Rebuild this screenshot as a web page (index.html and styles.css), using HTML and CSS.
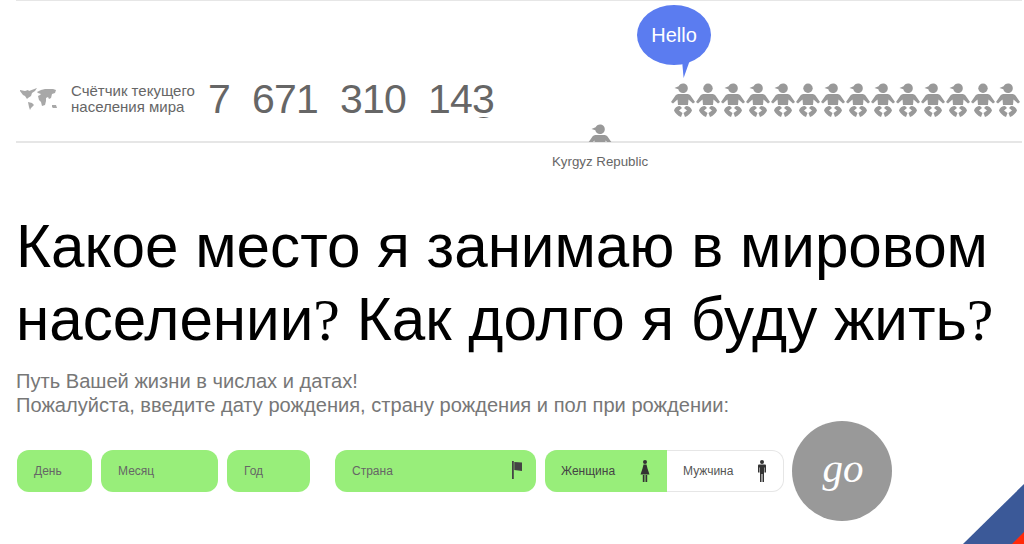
FILE: index.html
```html
<!DOCTYPE html>
<html lang="ru">

<head>
  <meta charset="UTF-8">
  <title>Счётчик населения мира</title>
  <link rel="stylesheet" href="styles.css">
</head>

<body>
  <svg class="sprites" width="0" height="0">
    <symbol id="baby-body" viewBox="0 0 24 34">
      <path d="M8 11h8c1.500 0 2.500 0.500 3.500 1.500l4.500 6.500-2 1.500-4.500-4-0.500 5.500h-10l-0.500-5.500-4.500 4-2-1.500 4.500-6.500c1-1 2-1.500 3.500-1.500z" />
      <path d="M9 23c-3 0-5.500 2-6 4.500 1 2.500 4 5.500 7 6.500l1.500-4-3.500-2.500 3-2.500z" />
      <path d="M15 23c3 0 5.500 2 6 4.500-1 2.500-4 5.500-7 6.500l-1.500-4 3.500-2.500-3-2.500z" />
    </symbol>
    <symbol id="baby" viewBox="0 0 24 34">
      <use href="#baby-body" width="24" height="34" />
      <path d="M12 0.500c2.700 0 4.800 2 4.800 4.700s-2.100 4.800-4.800 4.800c-2.400 0-4.300-1.600-4.700-3.800l-3.800-1.200 4.100-1.700c0.700-1.700 2.400-2.800 4.400-2.800z" />
    </symbol>
    <symbol id="baby-round" viewBox="0 0 24 34">
      <use href="#baby-body" width="24" height="34" />
      <circle cx="12" cy="5.200" r="4.700" />
    </symbol>
  </svg>

  <div class="page">
    <header class="ticker">
      <svg class="world-icon" viewBox="0 0 38 22">
        <path d="M0 2l5 1 3-1 1 1 8-3-2 3-3 2-1 3-3 2-1 1-2-3-2-1-3-4z" />
        <path d="M8 14l4 1 2 2-3 3-1 2-1-3z" />
        <path d="M17 4l4-2 4-1 8 0 3 1-1 3-3 1-1 4-2 1-1-2-2 1 0 3-1 4-3 1-1-4-2-2-1-4 2-1 1-1-3-1z" />
        <path d="M32 17l4 0 1 3-4 0-1-1z" />
      </svg>
      <p class="ticker-label">Счётчик текущего<br>населения мира</p>
      <div class="counter">
        <span class="group">7</span>
        <span class="group">671</span>
        <span class="group">310</span>
        <span class="group">14<span class="roll"><span class="roll-strip">3<br>2</span></span></span>
      </div>
      <div class="babies">
        <svg class="baby"><use href="#baby" /></svg>
        <svg class="baby"><use href="#baby-round" /></svg>
        <svg class="baby"><use href="#baby" /></svg>
        <svg class="baby"><use href="#baby" /></svg>
        <svg class="baby"><use href="#baby" /></svg>
        <svg class="baby"><use href="#baby-round" /></svg>
        <svg class="baby"><use href="#baby" /></svg>
        <svg class="baby"><use href="#baby" /></svg>
        <svg class="baby"><use href="#baby" /></svg>
        <svg class="baby"><use href="#baby" /></svg>
        <svg class="baby"><use href="#baby" /></svg>
        <svg class="baby"><use href="#baby" /></svg>
        <svg class="baby"><use href="#baby-round" /></svg>
        <svg class="baby"><use href="#baby" /></svg>
      </div>
      <div class="bubble">Hello</div>
      <div class="new-baby">
        <svg class="baby"><use href="#baby" /></svg>
      </div>
      <span class="country-tag">Kyrgyz Republic</span>
    </header>

    <h1 class="title">Какое место я занимаю в мировом населении<span class="question">?</span> Как долго я буду жить<span class="question">?</span></h1>

    <p class="intro">Путь Вашей жизни в числах и датах!<br>Пожалуйста, введите дату рождения, страну рождения и пол при рождении:</p>

    <form class="birth-form">
      <div class="field field-day">День</div>
      <div class="field field-month">Месяц</div>
      <div class="field field-year">Год</div>
      <div class="field field-country">
        Страна
        <svg class="flag-icon" viewBox="0 0 10 18">
          <path d="M0 0h1.800v18h-1.800z" />
          <path d="M2.300 1l7.700 0.500v8.500l-7.700 -1z" />
        </svg>
      </div>
      <div class="gender">
        <div class="gender-option active">
          Женщина
          <svg class="person-icon" viewBox="0 0 10 22">
            <circle cx="5" cy="2" r="2" />
            <path d="M3.500 4.500h3l1 4 2 6h-9l2-6z" />
            <path d="M2.800 15h1.700v7h-1.700zM5.500 15h1.700v7h-1.700z" />
          </svg>
        </div>
        <div class="gender-option">
          Мужчина
          <svg class="person-icon" viewBox="0 0 10 22">
            <circle cx="5" cy="2" r="2" />
            <path d="M1.500 4.500h7l0.500 1v7h-1.500v-5h-0.500v14.500h-1.500v-8h-1v8h-1.500v-14.500h-0.500v5h-1.500v-7z" />
          </svg>
        </div>
      </div>
      <div class="go-button">go</div>
    </form>
  </div>

  <svg class="corner" viewBox="0 0 61 60">
    <path class="corner-blue" d="M61 0v60h-61z" />
    <path class="corner-red" d="M61 48v12h-12z" />
  </svg>
</body>

</html>
```

FILE: styles.css
```css
* {
  margin: 0;
  padding: 0;
  box-sizing: border-box;
}

html,
body {
  height: 544px;
  overflow: hidden;
}

body {
  font-family: 'Liberation Sans', Arial, sans-serif;
  background-color: #fff;
  color: #666;
  position: relative;
}

.sprites {
  position: absolute;
}

.page {
  padding: 0 2px 0 16px;
}

.ticker {
  height: 143px;
  border-top: 1px solid #e6e6e6;
  border-bottom: 2px solid #e6e6e6;
  display: flex;
  align-items: flex-start;
  padding-top: 82px;
  position: relative;
}

.world-icon {
  width: 38px;
  height: 22px;
  margin: 5px 0 0 4px;
  fill: #999;
  opacity: 0.85;
  flex-shrink: 0;
}

.ticker-label {
  font-size: 15px;
  line-height: 16px;
  margin: 0 0 0 13px;
  white-space: nowrap;
}

.counter {
  display: flex;
  gap: 22px;
  margin: -1px 0 0 13px;
  font-size: 41px;
  line-height: 34px;
  letter-spacing: -0.800px;
}

.group {
  display: flex;
}

/* last digit is caught mid-roll, the next one shows under it */
.roll {
  display: block;
  width: 22px;
  height: 33px;
  margin-top: 3px;
  overflow: hidden;
  position: relative;
}

.roll-strip {
  display: block;
  position: absolute;
  left: 0;
  top: -2px;
  line-height: 32px;
}

.babies {
  margin-left: auto;
  display: flex;
  gap: 1px;
  width: 351px;
  overflow: hidden;
  fill: #999;
}

.baby {
  width: 24px;
  height: 34px;
  flex-shrink: 0;
}

.bubble {
  position: absolute;
  left: 621px;
  top: 4px;
  width: 74px;
  height: 60px;
  border-radius: 50%;
  background-color: #5b7cf0;
  color: #fff;
  font-size: 20px;
  display: flex;
  align-items: center;
  justify-content: center;
}

.bubble::after {
  content: '';
  position: absolute;
  left: 45px;
  top: 55px;
  width: 8px;
  height: 18px;
  background-color: #5b7cf0;
  clip-path: polygon(0 0, 100% 0, 20% 100%);
}

.new-baby {
  position: absolute;
  left: 572px;
  top: 123px;
  height: 18px;
  overflow: hidden;
  fill: #999;
}

.country-tag {
  position: absolute;
  left: 536px;
  top: 153px;
  font-size: 13.300px;
  white-space: nowrap;
}

.title {
  font-size: 60.200px;
  font-weight: 400;
  line-height: 73px;
  color: #000;
  margin-top: 67px;
}

.question {
  font-family: 'Liberation Serif', 'Times New Roman', serif;
  font-size: 60px;
}

.intro {
  font-size: 20.100px;
  line-height: 24px;
  color: #777;
  margin-top: 12px;
}

.birth-form {
  display: flex;
  align-items: center;
  margin: 4px 0 0 1px;
}

.field {
  height: 42px;
  border-radius: 12px;
  background-color: #98ee7a;
  font-size: 12px;
  color: #666;
  display: flex;
  align-items: center;
  justify-content: space-between;
  padding: 0 17px;
  margin-right: 9px;
}

.field-day {
  width: 75px;
}

.field-month {
  width: 117px;
}

.field-year {
  width: 83px;
  margin-right: 25px;
}

.field-country {
  width: 201px;
  padding-right: 14px;
}

.flag-icon {
  width: 10px;
  height: 18px;
  fill: #444;
  margin-top: -2px;
}

.gender {
  display: flex;
  width: 239px;
  height: 42px;
  border: 1px solid #e6e6e6;
  border-left: 0;
  border-radius: 12px;
}

.gender-option {
  flex: 1;
  font-size: 12px;
  color: #555;
  display: flex;
  align-items: center;
  justify-content: space-between;
  padding: 0 16px;
}

.gender-option.active {
  flex: 0 0 122px;
  background-color: #98ee7a;
  color: #444;
  border-radius: 12px 0 0 12px;
  margin: -1px 0;
  padding-right: 17px;
}

.person-icon {
  width: 10px;
  height: 22px;
  fill: #333;
}

.go-button {
  width: 100px;
  height: 100px;
  border-radius: 50%;
  background-color: #999;
  color: #fff;
  font-family: 'Liberation Serif', 'Times New Roman', serif;
  font-style: italic;
  font-size: 41px;
  display: flex;
  align-items: center;
  justify-content: center;
  padding: 0 0 6px 2px;
  margin-left: 8px;
  flex-shrink: 0;
}

.corner {
  position: absolute;
  right: 0;
  bottom: 0;
  width: 61px;
  height: 60px;
}

.corner-blue {
  fill: #3b5998;
}

.corner-red {
  fill: #ff2a0a;
}
```
